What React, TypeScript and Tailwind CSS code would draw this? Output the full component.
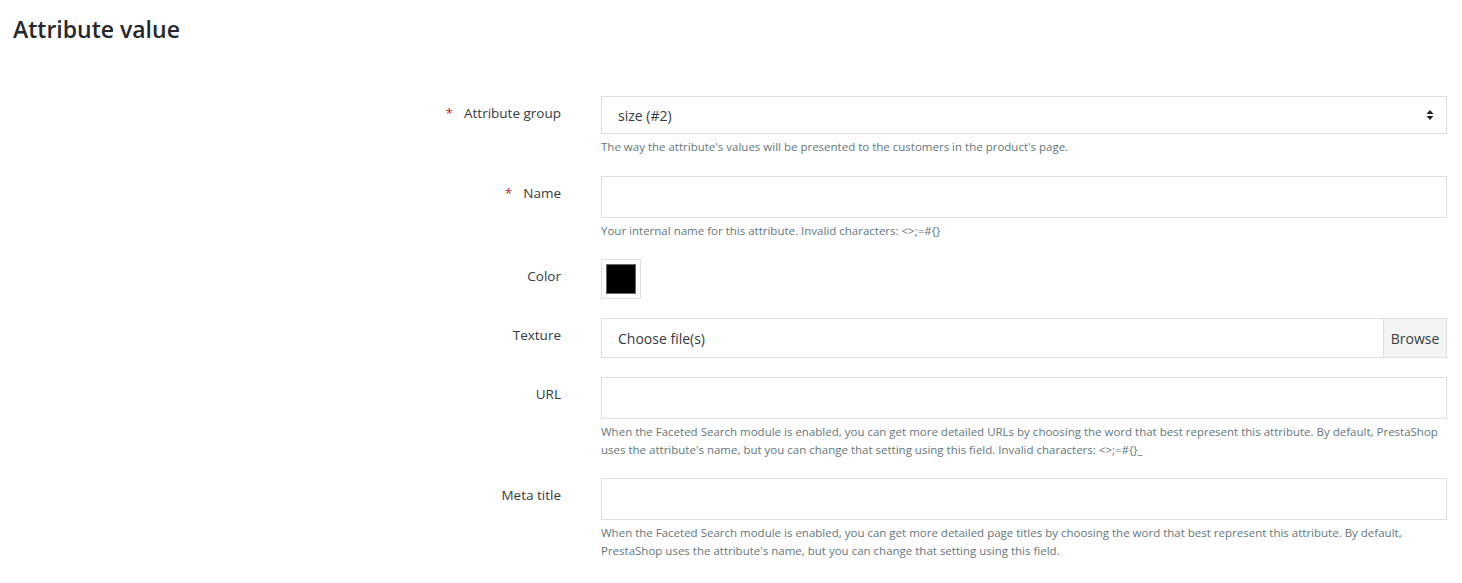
const font = { fontFamily: '"Open Sans", "Noto Sans", sans-serif' }

type RowProps = {
  label: string
  required?: boolean
  help?: string
  children: React.ReactNode
}

function Row({ label, required, help, children }: RowProps) {
  return (
    <div className="flex mb-5">
      <div className="w-[586px] shrink-0 pr-[25px] pt-[7px] text-right text-[13.5px] leading-[21px] text-[#363a41]">
        {required && <span className="text-[#c0282f] mr-[11px]">*</span>}
        {label}
      </div>
      <div className="flex-1 pl-[15px] pr-[15px]">
        {children}
        {help && (
          <p className="mt-[4px] text-[11.5px] leading-[18px] text-[#66777c]">{help}</p>
        )}
      </div>
    </div>
  )
}

export default function App() {
  return (
    <div className="bg-white min-h-[583px] text-[#363a41]" style={font}>
      <h1 className="px-[13px] pt-[13px] text-[23px] leading-[32px] font-semibold text-[#25292f]">
        Attribute value
      </h1>
      <div className="pt-[51px]">
        <Row
          label="Attribute group"
          required
          help="The way the attribute's values will be presented to the customers in the product's page."
        >
          <div className="h-[38px] border border-[#dfdfdf] flex items-center justify-between pl-4 pr-3">
            <span className="text-[14px]">size (#2)</span>
            <svg width="8" height="12" viewBox="0 0 8 12">
              <path d="M4 1 L7.5 5 H0.5 Z M4 11 L7.5 7 H0.5 Z" fill="#222" />
            </svg>
          </div>
        </Row>
        <Row
          label="Name"
          required
          help="Your internal name for this attribute. Invalid characters: <>;=#{}"
        >
          <div className="h-[42px] border border-[#dfdfdf]" />
        </Row>
        <div className="-mt-px">
          <Row label="Color">
            <div className="w-10 h-10 border border-[#dfdfdf] flex items-center justify-center">
              <div className="w-[30px] h-[30px] bg-black border border-[#666]" />
            </div>
          </Row>
        </div>
        <div className="-mt-px">
          <Row label="Texture">
            <div className="h-10 border border-[#dfdfdf] flex">
              <div className="flex-1 flex items-center pl-4 text-[14px]">Choose file(s)</div>
              <div className="w-[63px] border-l border-[#dfdfdf] bg-[#f4f4f4] flex items-center justify-center text-[14px]">
                Browse
              </div>
            </div>
          </Row>
        </div>
        <div className="-mt-px">
          <Row
            label="URL"
            help="When the Faceted Search module is enabled, you can get more detailed URLs by choosing the word that best represent this attribute. By default, PrestaShop uses the attribute's name, but you can change that setting using this field. Invalid characters: <>;=#{}_"
          >
            <div className="h-[42px] border border-[#dfdfdf]" />
          </Row>
        </div>
        <div className="-mt-px">
          <Row
            label="Meta title"
            help="When the Faceted Search module is enabled, you can get more detailed page titles by choosing the word that best represent this attribute. By default, PrestaShop uses the attribute's name, but you can change that setting using this field."
          >
            <div className="h-[42px] border border-[#dfdfdf]" />
          </Row>
        </div>
      </div>
    </div>
  )
}
